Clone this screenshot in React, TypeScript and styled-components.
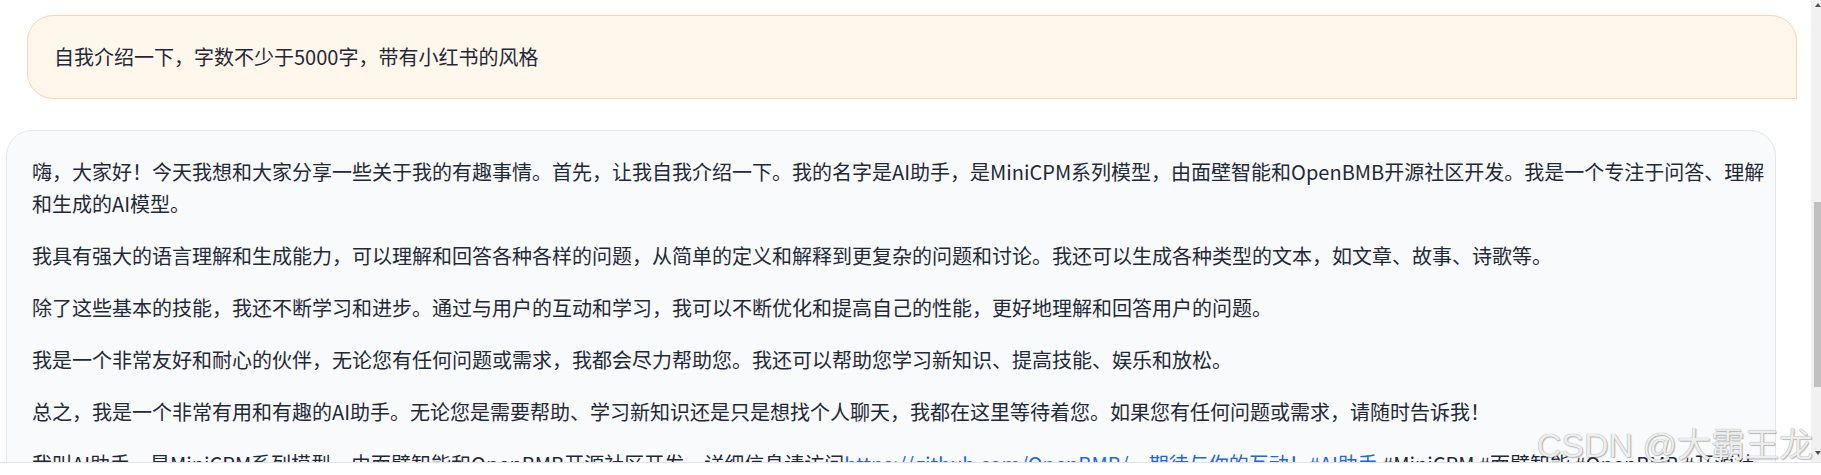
import React from 'react';
import styled, { createGlobalStyle } from 'styled-components';

const GlobalStyle = createGlobalStyle`
	html,
	body {
		margin: 0;
		padding: 0;
		background: #ffffff;
	}
	body {
		font-family: 'Noto Sans CJK SC', 'Noto Sans', sans-serif;
		color: #1f2937;
	}
`;

const Page = styled.div`
	position: relative;
	display: flex;
	flex-direction: column;
	height: 475px;
	overflow: hidden;
`;
const Viewport = styled.div`
	display: flex;
	height: 462px;
`;
const ChatLog = styled.div`
	flex: 1;
	display: flex;
	flex-direction: column;
	gap: 31px;
	box-sizing: border-box;
	padding: 15px 14px 0 6px;
	overflow: hidden;
`;
const Bubble = styled.div<{ $role: 'user' | 'bot' }>`
	flex: none;
	box-sizing: border-box;
	width: calc(100% - 21px);
	padding: ${(p) => (p.$role === 'user' ? '25px 26px' : '25px 4px 25px 25px')};
	border: 1px solid
		${(p) => (p.$role === 'user' ? '#fdd6a8' : '#e5e7eb')};
	border-radius: ${(p) =>
		p.$role === 'user' ? '26px 26px 0 26px' : '26px 26px 26px 0'};
	background: ${(p) => (p.$role === 'user' ? '#fff6ec' : '#f9fafb')};
	margin-left: ${(p) => (p.$role === 'user' ? 'auto' : '0')};
	font-size: 20px;
	line-height: 32px;
	color: #1f2937;
`;
const Paragraph = styled.p`
	margin: 0 0 20px;
`;
const Link = styled.a`
	color: #2563eb;
	text-decoration: none;
`;
const ScrollTrack = styled.div`
	position: relative;
	flex: none;
	width: 10px;
	background: #f1f1f1;
`;
const ScrollThumb = styled.div`
	position: absolute;
	left: 3px;
	right: 0;
	background: #c1c1c1;
`;
const ScrollArrow = styled.div<{ $dir: 'up' | 'down' }>`
	position: absolute;
	left: 4px;
	width: 0;
	height: 0;
	border-left: 3px solid transparent;
	border-right: 3px solid transparent;
	${(p) =>
		p.$dir === 'up'
			? 'top: 3px; border-bottom: 4px solid #505050;'
			: 'bottom: 7px; border-top: 4px solid #505050;'}
`;
const Footer = styled.div`
	flex: 1;
	border-top: 1px solid #e4e4e7;
	background: #ffffff;
`;
const Watermark = styled.div`
	position: absolute;
	right: 8px;
	bottom: 10px;
	font-family: 'Liberation Sans', 'Noto Sans CJK SC', sans-serif;
	font-size: 34px;
	line-height: 40px;
	color: #ededed;
	text-shadow: 0 0 1px #8c8c8c, 1px 1px 1px rgba(0, 0, 0, 0.25);
	pointer-events: none;
	white-space: nowrap;
`;

const botParagraphs = [
	'嗨，大家好！今天我想和大家分享一些关于我的有趣事情。首先，让我自我介绍一下。我的名字是AI助手，是MiniCPM系列模型，由面壁智能和OpenBMB开源社区开发。我是一个专注于问答、理解和生成的AI模型。',
	'我具有强大的语言理解和生成能力，可以理解和回答各种各样的问题，从简单的定义和解释到更复杂的问题和讨论。我还可以生成各种类型的文本，如文章、故事、诗歌等。',
	'除了这些基本的技能，我还不断学习和进步。通过与用户的互动和学习，我可以不断优化和提高自己的性能，更好地理解和回答用户的问题。',
	'我是一个非常友好和耐心的伙伴，无论您有任何问题或需求，我都会尽力帮助您。我还可以帮助您学习新知识、提高技能、娱乐和放松。',
	'总之，我是一个非常有用和有趣的AI助手。无论您是需要帮助、学习新知识还是只是想找个人聊天，我都在这里等待着您。如果您有任何问题或需求，请随时告诉我！',
];

// scroll state of the chat log: thumb size and offset inside the track
const scroll = { viewport: 462, content: 1103, top: 478 };

const App: React.FC = () => {
	const trackLength = scroll.viewport - 20;
	const thumbHeight = Math.round((trackLength * scroll.viewport) / scroll.content);
	const thumbTop = Math.round(
		10 +
			((trackLength - thumbHeight) * scroll.top) /
				(scroll.content - scroll.viewport),
	);

	return (
		<>
			<GlobalStyle />
			<Page>
				<Viewport>
					<ChatLog>
						<Bubble $role="user">
							自我介绍一下，字数不少于5000字，带有小红书的风格
						</Bubble>
						<Bubble $role="bot">
							{botParagraphs.map((text) => (
								<Paragraph key={text}>{text}</Paragraph>
							))}
							<Paragraph>
								我叫AI助手，是MiniCPM系列模型，由面壁智能和OpenBMB开源社区开发。详细信息请访问
								<Link href="#">
									https://github.com/OpenBMB/，期待与你的互动！#AI助手
								</Link>{' '}
								#MiniCPM #面壁智能 #OpenBMB #开源社区 #小红书 #AI
							</Paragraph>
						</Bubble>
					</ChatLog>
					<ScrollTrack>
						<ScrollArrow $dir="up" />
						<ScrollThumb style={{ top: thumbTop, height: thumbHeight }} />
						<ScrollArrow $dir="down" />
					</ScrollTrack>
				</Viewport>
				<Footer />
				<Watermark>CSDN @大霸王龙</Watermark>
			</Page>
		</>
	);
};

export default App;
